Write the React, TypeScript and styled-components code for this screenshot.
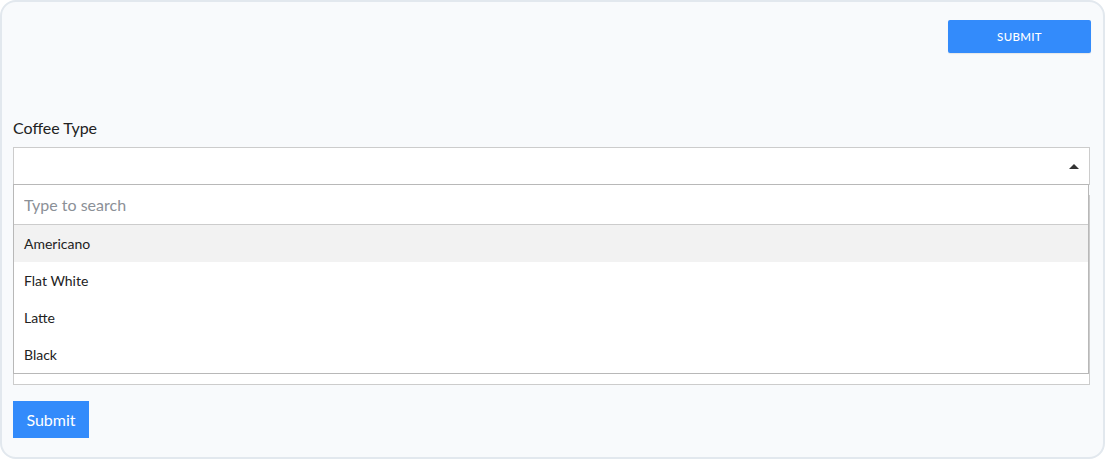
import React from "react";
import styled, { createGlobalStyle } from "styled-components";

const GlobalStyle = createGlobalStyle`
  html, body {
    margin: 0;
    padding: 0;
    background: #ffffff;
    font-family: Lato, "Open Sans", "Liberation Sans", sans-serif;
  }
  * {
    box-sizing: border-box;
  }
`;

const Card = styled.div`
  width: 1105px;
  height: 459px;
  border: 2px solid #e2e8ee;
  border-radius: 16px;
  background: #f8fafc;
  padding: 18px 13px 19px 11px;
  display: flex;
  flex-direction: column;
`;

const Toolbar = styled.div`
  display: flex;
  justify-content: flex-end;
  margin-right: -1px;
`;

const TopButton = styled.button`
  width: 143px;
  height: 33px;
  border: none;
  border-radius: 2px;
  background: #338bfb;
  color: #ffffff;
  font-family: inherit;
  font-size: 11.5px;
  font-weight: 500;
  letter-spacing: 0.3px;
  text-transform: uppercase;
  box-shadow: 0 1px 1px rgba(0, 0, 0, 0.08);
`;

const Field = styled.div`
  margin-top: 66px;
  display: flex;
  flex-direction: column;
`;

const Label = styled.label`
  font-size: 16px;
  line-height: 18px;
  color: #222222;
  margin-bottom: 10px;
`;

const SelectWrap = styled.div`
  position: relative;
`;

const Control = styled.div`
  height: 38px;
  border: 1px solid #cccccc;
  background: #ffffff;
  display: flex;
  align-items: center;
  justify-content: flex-end;
  padding-right: 10px;
`;

const Caret = styled.span`
  width: 0;
  height: 0;
  border-left: 5px solid transparent;
  border-right: 5px solid transparent;
  border-bottom: 5px solid #333333;
`;

const Menu = styled.div`
  position: absolute;
  top: 37px;
  left: 0;
  right: 1px;
  background: #ffffff;
  border: 1px solid #b8b8b8;
  z-index: 2;
`;

const Search = styled.input`
  display: block;
  width: 100%;
  height: 40px;
  border: none;
  border-bottom: 1px solid #cccccc;
  outline: none;
  padding: 0 10px;
  font-family: inherit;
  font-size: 16px;
  color: #222222;
  background: #ffffff;
  &::placeholder {
    color: #8b9097;
  }
`;

const Option = styled.div<{ $active?: boolean }>`
  height: 37px;
  display: flex;
  align-items: center;
  padding: 0 10px;
  font-size: 14px;
  color: #222222;
  background: ${(p) => (p.$active ? "#f2f2f2" : "#ffffff")};
`;

const TextBox = styled.div`
  margin-top: 10px;
  height: 190px;
  border: 1px solid #cccccc;
  background: #ffffff;
`;

const SubmitButton = styled.button`
  align-self: flex-start;
  margin-top: 16px;
  width: 76px;
  height: 37px;
  border: none;
  background: #338bfb;
  color: #ffffff;
  font-family: inherit;
  font-size: 16px;
  padding: 0;
`;

const options = ["Americano", "Flat White", "Latte", "Black"];

export default function App() {
  return (
    <>
      <GlobalStyle />
      <Card>
        <Toolbar>
          <TopButton>Submit</TopButton>
        </Toolbar>
        <Field>
          <Label>Coffee Type</Label>
          <SelectWrap>
            <Control>
              <Caret />
            </Control>
            <Menu>
              <Search placeholder="Type to search" autoFocus />
              {options.map((o, i) => (
                <Option key={o} $active={i === 0}>
                  {o}
                </Option>
              ))}
            </Menu>
          </SelectWrap>
          <TextBox />
        </Field>
        <SubmitButton>Submit</SubmitButton>
      </Card>
    </>
  );
}
